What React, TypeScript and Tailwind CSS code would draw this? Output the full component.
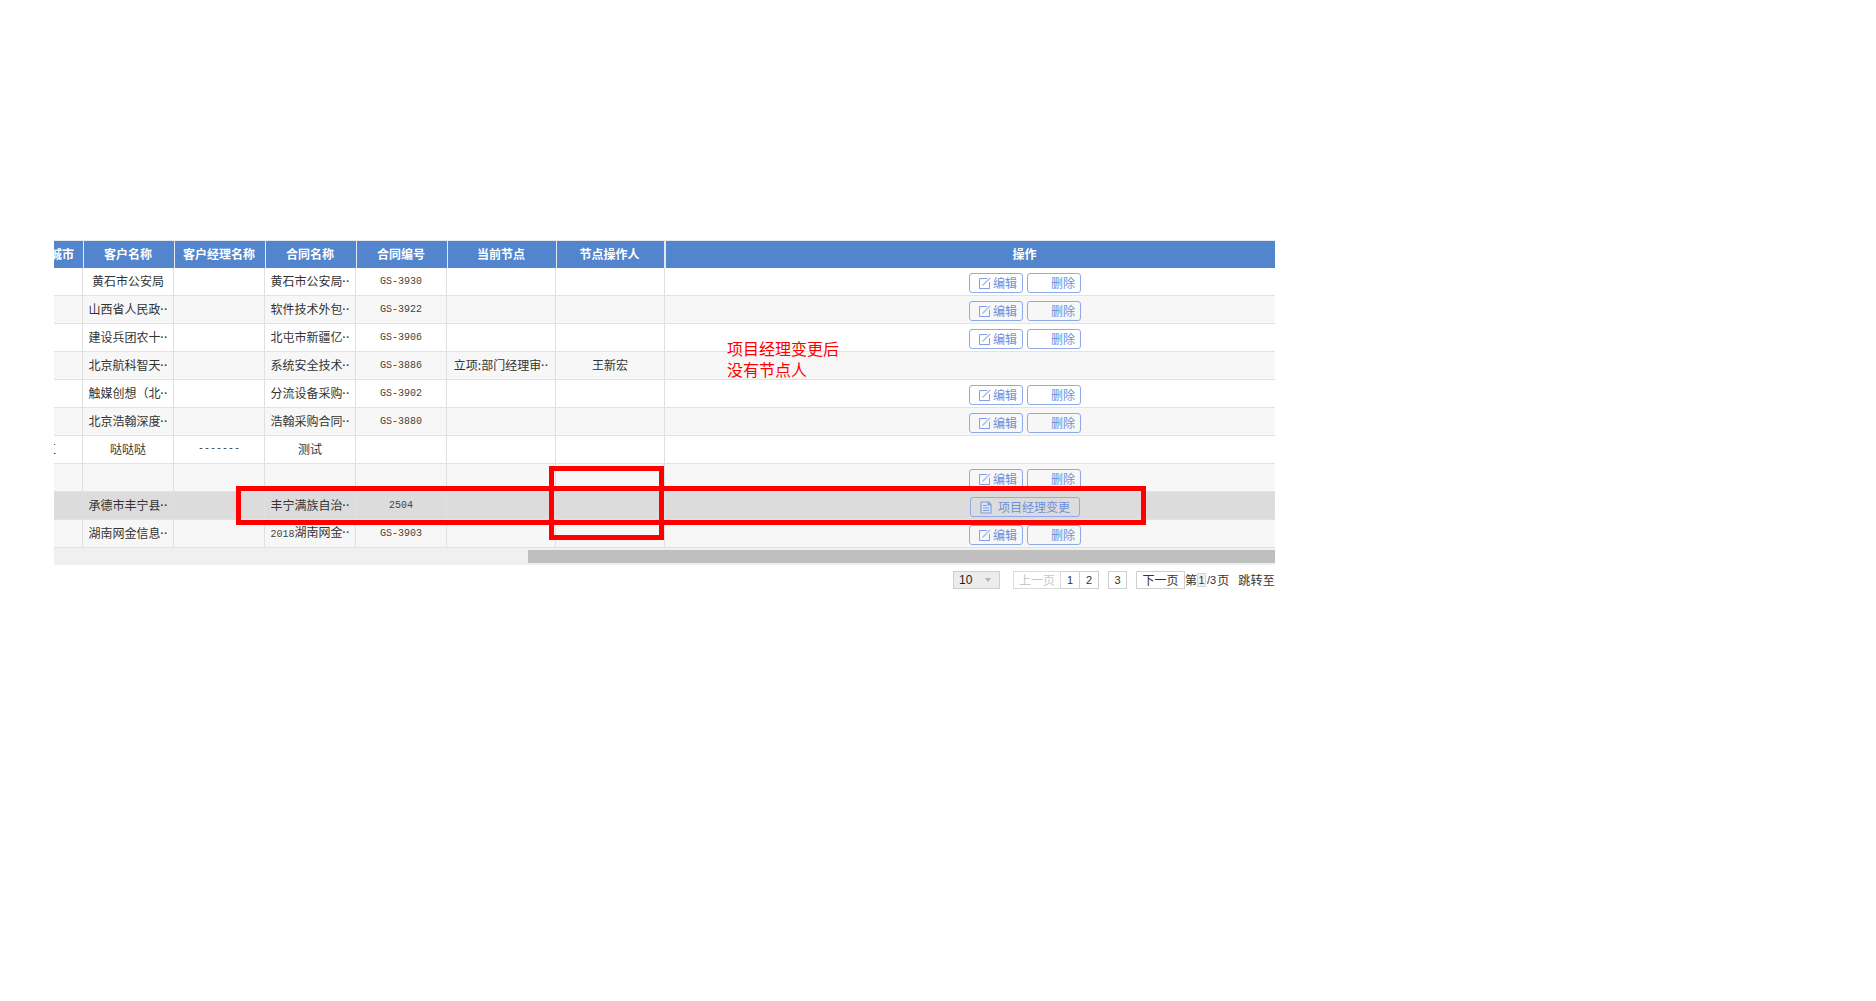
import React from "react";

const cjk = "font-['Noto_Sans_CJK_SC','Liberation_Sans',sans-serif]";
const mono = "font-['Liberation_Mono','Noto_Sans_CJK_SC',monospace] text-[10px] text-[#444]";
const digit = "font-['Liberation_Sans'] text-[11px]";

type Row = {
  customer?: string;
  contract?: string;
  no?: string;
  manager?: string;
  node?: string;
  operator?: string;
  action?: "edit" | "change";
  first?: string;
};

const rows: Row[] = [
  { customer: "黄石市公安局", contract: "黄石市公安局", no: "GS-3930", action: "edit" },
  { customer: "山西省人民政", contract: "软件技术外包", no: "GS-3922", action: "edit" },
  { customer: "建设兵团农十", contract: "北屯市新疆亿", no: "GS-3906", action: "edit" },
  { customer: "北京航科智天", contract: "系统安全技术", no: "GS-3886", node: "立项:部门经理审", operator: "王新宏" },
  { customer: "触媒创想（北", contract: "分流设备采购", no: "GS-3902", action: "edit" },
  { customer: "北京浩翰深度", contract: "浩翰采购合同", no: "GS-3880", action: "edit" },
  { customer: "哒哒哒", manager: "-------", contract: "测试", first: "工" },
  { action: "edit" },
  { customer: "承德市丰宁县", contract: "丰宁满族自治", no: "2504", action: "change" },
  { customer: "湖南网金信息", contract: "2018湖南网金", no: "GS-3903", action: "edit" },
];

const Dots = () => (
  <span className="inline-block w-[7px] -translate-y-[1px] font-['Liberation_Sans'] text-[10px] font-bold leading-none tracking-[0.5px]">
    ··
  </span>
);

const Clip = ({ text }: { text?: string }) => {
  if (!text) return null;
  // 短文本完整显示，长文本带省略点
  const short = text === "哒哒哒" || text === "测试";
  const m = text.match(/^(\d+)(.*)$/);
  return (
    <>
      {m ? <span className={mono}>{m[1]}</span> : null}
      {m ? m[2] : text}
      {short ? null : <Dots />}
    </>
  );
};

const EditIcon = () => (
  <svg width="12" height="12" viewBox="0 0 12 12" fill="none" className="shrink-0">
    <path d="M8 1.5H0.5V11.5H10.5V5" stroke="#7f9fe0" strokeWidth="1" />
    <path d="M3.5 8.5L11 1" stroke="#a9bff0" strokeWidth="1.5" />
  </svg>
);

const DocIcon = () => (
  <svg width="12" height="13" viewBox="0 0 12 13" fill="none" className="shrink-0">
    <path d="M1 1H8.5L11 3.5V12H1V1Z" fill="#dbe3f3" stroke="#7f9fe0" strokeWidth="1.2" />
    <path d="M3 4.5H7M3 7H9M3 9.5H9" stroke="#7f9fe0" strokeWidth="1" />
    <path d="M8 1V4H11" fill="#7f9fe0" stroke="#7f9fe0" strokeWidth="1" />
  </svg>
);

const Btn = ({ w, className, children }: { w: string; className?: string; children: React.ReactNode }) => (
  <div
    className={`flex h-5 items-center rounded-[3px] border border-[#8eaae8] text-xs leading-none text-[#6c8fdc] ${w} ${className ?? ""}`}
  >
    {children}
  </div>
);

const headerCell = "flex h-full items-center justify-center border-r border-[#e4e8f0] pb-[2px] pr-[2px] text-xs font-bold text-white";
const cell = "flex h-full items-center justify-center overflow-hidden whitespace-nowrap border-r border-[#e0e0e0] pb-[2px]";

const rowBg = (i: number) => {
  if (i === 8) return "bg-[#dcdcdc]";
  return i % 2 === 0 ? "bg-white" : "bg-[#f7f7f7]";
};

export default function App() {
  return (
    <div className={`relative h-[1001px] w-full overflow-hidden bg-white pl-[54px] pt-[240px] ${cjk}`}>
      <div className="w-[1221px] overflow-hidden">
        <div className="h-px bg-[#e8e8e8]" />
        {/* 表头 */}
        <div className="flex h-[27px] w-[1344px] -translate-x-[13px] bg-[#5285cd]">
          <div className={`${headerCell} w-[43px] justify-end !pr-[9px]`}>城市</div>
          <div className={`${headerCell} w-[91px]`}>客户名称</div>
          <div className={`${headerCell} w-[91px]`}>客户经理名称</div>
          <div className={`${headerCell} w-[91px]`}>合同名称</div>
          <div className={`${headerCell} w-[91px]`}>合同编号</div>
          <div className={`${headerCell} w-[109px]`}>当前节点</div>
          <div className={`${headerCell} w-[109px] border-r-2`}>节点操作人</div>
          <div className="flex h-full w-[719px] items-center justify-center pb-[2px] pr-[2px] text-xs font-bold text-white">操作</div>
        </div>

        {rows.map((r, i) => (
          <div
            key={i}
            className={`flex h-[28px] w-[1344px] -translate-x-[13px] border-b border-[#e2e2e2] text-xs text-[#333] ${rowBg(i)}`}
          >
            <div className={`${cell} w-[42px] justify-end ${r.first ? "pr-[26px]" : ""}`}>{r.first}</div>
            <div className={`${cell} w-[91px]`}>
              <span>
                {r.customer === "黄石市公安局" ? r.customer : <Clip text={r.customer} />}
              </span>
            </div>
            <div className={`${cell} w-[91px] ${mono}`}>{r.manager}</div>
            <div className={`${cell} w-[91px]`}>
              <span>
                <Clip text={r.contract} />
              </span>
            </div>
            <div className={`${cell} w-[91px] !pb-0 ${mono}`}>{r.no}</div>
            <div className={`${cell} w-[109px]`}>
              {r.node ? (
                <span>
                  {r.node}
                  <Dots />
                </span>
              ) : null}
            </div>
            <div className={`${cell} w-[109px]`}>{r.operator}</div>
            <div className="flex h-full w-[720px] justify-center gap-[4px] pt-[5px]">
              {r.action === "edit" ? (
                <>
                  <Btn w="w-[54px]" className="pl-[9px]">
                    <EditIcon />
                    <span className="ml-[2px]">编辑</span>
                  </Btn>
                  <Btn w="w-[54px]" className="pl-[23px]">
                    删除
                  </Btn>
                </>
              ) : null}
              {r.action === "change" ? (
                <Btn w="w-[110px]" className="pl-[9px]">
                  <DocIcon />
                  <span className="ml-[6px]">项目经理变更</span>
                </Btn>
              ) : null}
            </div>
          </div>
        ))}

        {/* 横向滚动条 */}
        <div className="h-[17px] bg-[#f0f0f0] pt-[2px]">
          <div className="ml-[474px] h-[13px] bg-[#bfbfbf]" />
        </div>

        {/* 分页 */}
        <div className="mt-[6px] flex h-[18px] items-center whitespace-nowrap pl-[899px] text-xs text-[#333]">
          <div className="flex h-full w-[47px] shrink-0 items-center border border-[#cfcfcf] bg-[#ececec] pl-[5px]">
            <span className="font-['Liberation_Sans'] text-[12px] text-[#222]">10</span>
            <span className="ml-[13px] h-0 w-0 border-x-[3px] border-t-[4px] border-x-transparent border-t-[#a9b7cc]" />
          </div>
          <div className="ml-[13px] flex h-full w-[48px] shrink-0 items-center justify-center border border-[#dcdcdc] text-[#c8c8c8]">
            上一页
          </div>
          <div className={`flex h-full w-[19px] shrink-0 items-center justify-center border border-l-0 border-[#cfcfcf] ${digit}`}>
            1
          </div>
          <div className={`flex h-full w-[19px] shrink-0 items-center justify-center border border-l-0 border-[#cfcfcf] ${digit}`}>
            2
          </div>
          <div className={`ml-[9px] flex h-full w-[19px] shrink-0 items-center justify-center border border-[#cfcfcf] ${digit}`}>
            3
          </div>
          <div className="ml-[9px] flex h-full w-[49px] shrink-0 items-center justify-center border border-[#cfcfcf]">
            下一页
          </div>
          <span className="shrink-0">第</span>
          <span className={`flex h-[14px] w-[9px] shrink-0 items-center justify-center border border-[#d5d5d5] bg-[#f2f2f2] ${digit}`}>
            1
          </span>
          <span className={`mx-[1px] shrink-0 ${digit}`}>/3</span>
          <span className="shrink-0">页</span>
          <span className="ml-[9px] shrink-0 tracking-[0.3px]">跳转至:</span>
        </div>
      </div>

      {/* 标注 */}
      <div className="absolute left-[727px] top-[338px] text-base leading-[21px] text-[#ff0000]">
        项目经理变更后
        <br />
        没有节点人
      </div>
      <div className="absolute left-[236px] top-[486px] h-[39px] w-[910px] border-[5px] border-[#ff0000]" />
      <div className="absolute left-[549px] top-[466px] h-[74px] w-[115px] border-[5px] border-[#ff0000]" />
    </div>
  );
}
